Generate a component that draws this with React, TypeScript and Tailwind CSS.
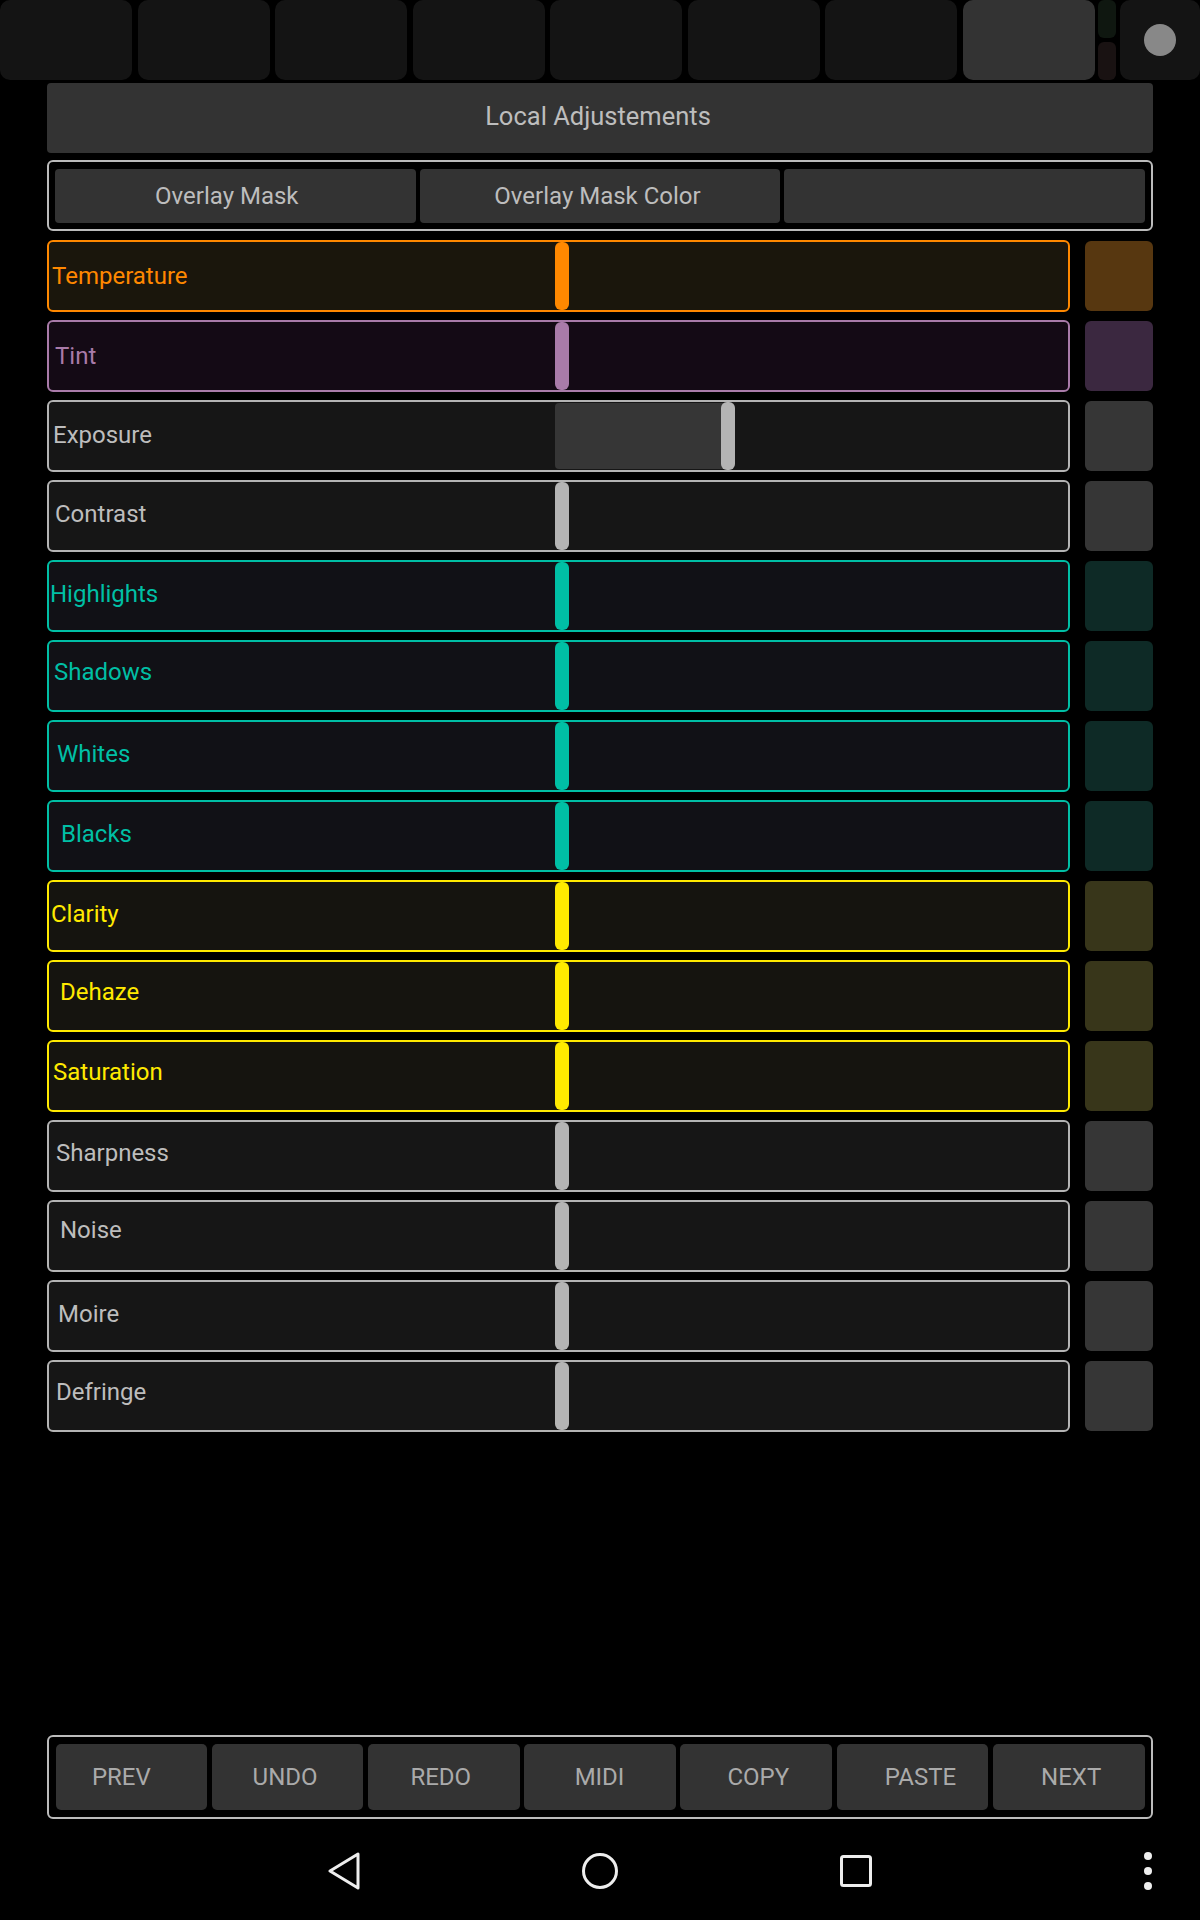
// Lightroom-style MIDI controller surface: local adjustments page

type Slider = {
  label: string;
  frame: string; // border + background
  text: string;
  knob: string;
  swatch: string;
  pad: string; // label nudge
};

const GRAY = {
  frame: "border-[#b4b4b4] bg-[#161616]",
  text: "text-[#bdbdbd]",
  knob: "bg-[#b4b4b4]",
  swatch: "bg-[#363636]",
};
const TEAL = {
  frame: "border-[#00bfa5] bg-[#111116]",
  text: "text-[#00bfa5]",
  knob: "bg-[#00bfa5]",
  swatch: "bg-[#0e2a26]",
};
const YELLOW = {
  frame: "border-[#ffea00] bg-[#15140f]",
  text: "text-[#ffea00]",
  knob: "bg-[#ffea00]",
  swatch: "bg-[#38361a]",
};

const SLIDERS: Slider[] = [
  {
    label: "Temperature",
    frame: "border-[#ff8800] bg-[#1a160c]",
    text: "text-[#ff8800]",
    knob: "bg-[#ff8800]",
    swatch: "bg-[#573710]",
    pad: "pl-[3px] mb-[1px]",
  },
  {
    label: "Tint",
    frame: "border-[#a97ba9] bg-[#140a15]",
    text: "text-[#a97ba9]",
    knob: "bg-[#a97ba9]",
    swatch: "bg-[#3b2840]",
    pad: "pl-[6px] mb-[1px]",
  },
  { label: "Exposure", ...GRAY, pad: "pl-[4px] mb-[3px]" },
  { label: "Contrast", ...GRAY, pad: "pl-[6px] mb-[4px]" },
  { label: "Highlights", ...TEAL, pad: "pl-[1px] mb-[4px]" },
  { label: "Shadows", ...TEAL, pad: "pl-[5px] mb-[8px]" },
  { label: "Whites", ...TEAL, pad: "pl-[8px] mb-[4px]" },
  { label: "Blacks", ...TEAL, pad: "pl-[12px] mb-[4px]" },
  { label: "Clarity", ...YELLOW, pad: "pl-[2px] mb-[5px]" },
  { label: "Dehaze", ...YELLOW, pad: "pl-[11px] mb-[8px]" },
  { label: "Saturation", ...YELLOW, pad: "pl-[4px] mb-[8px]" },
  { label: "Sharpness", ...GRAY, pad: "pl-[7px] mb-[7px]" },
  { label: "Noise", ...GRAY, pad: "pl-[11px] mb-[12px]" },
  { label: "Moire", ...GRAY, pad: "pl-[9px] mb-[5px]" },
  { label: "Defringe", ...GRAY, pad: "pl-[7px] mb-[8px]" },
];

const ACTIONS = [
  { label: "PREV", cls: "pr-[20px]" },
  { label: "UNDO", cls: "pr-[5px]" },
  { label: "REDO", cls: "pr-[6px]" },
  { label: "MIDI", cls: "pr-[1px]" },
  { label: "COPY", cls: "pl-[4px]" },
  { label: "PASTE", cls: "pl-[16px]" },
  { label: "NEXT", cls: "pl-[5px]" },
];

function SliderRow({ s }: { s: Slider }) {
  const isExposure = s.label === "Exposure";
  return (
    <div className="flex items-center h-[72px]">
      <div className={`relative w-[1023px] h-[72px] border-2 rounded-[6px] flex items-center ${s.frame}`}>
        {isExposure && (
          <div className="absolute left-[506px] top-[1px] bottom-[1px] w-[176px] rounded-[4px] bg-[#363636]" />
        )}
        <span className={`relative text-[24px] leading-none ${s.text} ${s.pad}`}>{s.label}</span>
        <div
          className={`absolute top-0 bottom-0 w-[14px] rounded-[6px] ${s.knob} ${
            isExposure ? "left-[672px]" : "left-[506px]"
          }`}
        />
      </div>
      <div className={`ml-[15px] w-[68px] h-[70px] rounded-[6px] ${s.swatch}`} />
    </div>
  );
}

export default function App() {
  return (
    <div className="w-[1200px] h-[1920px] bg-black flex flex-col overflow-hidden font-['Roboto',_'Liberation_Sans',_sans-serif]">
      {/* ===== TOP TABS ===== */}
      <div className="flex h-[80px] shrink-0">
        <div className="flex gap-[5.5px]">
          {Array.from({ length: 7 }).map((_, i) => (
            <div key={i} className="w-[132px] h-[80px] rounded-[10px] bg-[#141414]" />
          ))}
          <div className="w-[132px] h-[80px] rounded-[10px] bg-[#333333]" />
        </div>
        <div className="ml-[3px] w-[18px] flex flex-col gap-[4px]">
          <div className="h-[38px] rounded-[6px] bg-[#0f1710]" />
          <div className="h-[38px] rounded-[6px] bg-[#191212]" />
        </div>
        <div className="ml-[4.5px] w-[80px] h-[80px] rounded-[10px] bg-[#141414] flex items-center justify-center">
          <div className="w-[32px] h-[32px] rounded-full bg-[#888888]" />
        </div>
      </div>

      {/* ===== CONTENT ===== */}
      <div className="ml-[47px] w-[1106px]">
        <div className="mt-[3px] h-[70px] rounded-[4px] bg-[#333333] flex items-center justify-center">
          <span className="text-[25.5px] text-[#bdbdbd] mb-[3px] pr-[4px]">Local Adjustements</span>
        </div>

        <div className="mt-[7px] h-[71px] border-2 border-[#bbbbbb] rounded-[6px] px-[6px] pt-[7px] pb-[6px] flex gap-[4px]">
          {[
            { t: "Overlay Mask", cls: "pr-[17px]" },
            { t: "Overlay Mask Color", cls: "pr-[5px]" },
            { t: "", cls: "" },
          ].map((b, i) => (
            <div key={i} className="flex-1 rounded-[4px] bg-[#333333] flex items-center justify-center">
              <span className={`text-[24px] text-[#bdbdbd] ${b.cls}`}>{b.t}</span>
            </div>
          ))}
        </div>

        <div className="mt-[9px] flex flex-col gap-[8px]">
          {SLIDERS.map(s => (
            <SliderRow key={s.label} s={s} />
          ))}
        </div>
      </div>

      {/* ===== ACTION BAR ===== */}
      <div className="mt-auto ml-[47px] w-[1106px] h-[84px] border-2 border-[#bbbbbb] rounded-[6px] px-[6.5px] py-[7px] flex gap-[4.5px]">
        {ACTIONS.map(a => (
          <div key={a.label} className="flex-1 rounded-[5px] bg-[#333333] flex items-center justify-center">
            <span className={`text-[24px] text-[#aaaaaa] ${a.cls}`}>{a.label}</span>
          </div>
        ))}
      </div>

      {/* ===== ANDROID NAV ===== */}
      <div className="mt-[3px] h-[98px] shrink-0 flex items-center">
        <svg className="ml-[328px]" width="32" height="38" viewBox="0 0 32 38" fill="none">
          <path d="M30 2 L30 36 L2 19 Z" stroke="#eeeeee" strokeWidth="3" strokeLinejoin="round" />
        </svg>
        <svg className="ml-[222px]" width="36" height="36" viewBox="0 0 36 36" fill="none">
          <circle cx="18" cy="18" r="16.5" stroke="#eeeeee" strokeWidth="3" />
        </svg>
        <svg className="ml-[222px]" width="32" height="32" viewBox="0 0 32 32" fill="none">
          <rect x="1.5" y="1.5" width="29" height="29" rx="2" stroke="#eeeeee" strokeWidth="3" />
        </svg>
        <div className="ml-[272px] flex flex-col gap-[7px]">
          <div className="w-[8px] h-[8px] rounded-full bg-[#eeeeee]" />
          <div className="w-[8px] h-[8px] rounded-full bg-[#eeeeee]" />
          <div className="w-[8px] h-[8px] rounded-full bg-[#eeeeee]" />
        </div>
      </div>
    </div>
  );
}
